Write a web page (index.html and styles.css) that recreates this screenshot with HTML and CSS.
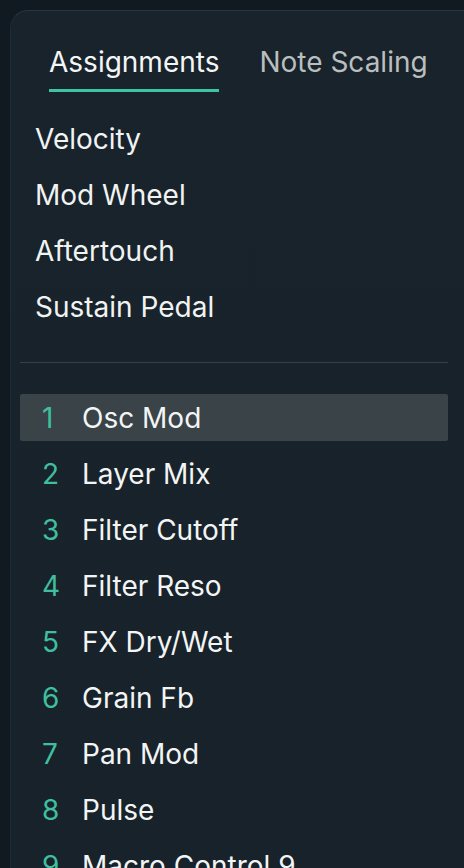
FILE: index.html
```html
<!DOCTYPE html>
<html>
<head>
<meta charset="utf-8">
<link rel="stylesheet" href="styles.css">
</head>
<body>
<div class="panel">
  <div class="tabs">
    <div class="tab active">Assignments</div>
    <div class="tab">Note Scaling</div>
  </div>
  <ul class="sources">
    <li>Velocity</li>
    <li>Mod Wheel</li>
    <li>Aftertouch</li>
    <li>Sustain Pedal</li>
  </ul>
  <div class="divider"></div>
  <ul class="macros">
    <li class="selected"><span class="num">1</span><span class="name">Osc Mod</span></li>
    <li><span class="num">2</span><span class="name">Layer Mix</span></li>
    <li><span class="num">3</span><span class="name">Filter Cutoff</span></li>
    <li><span class="num">4</span><span class="name">Filter Reso</span></li>
    <li><span class="num">5</span><span class="name">FX Dry/Wet</span></li>
    <li><span class="num">6</span><span class="name">Grain Fb</span></li>
    <li><span class="num">7</span><span class="name">Pan Mod</span></li>
    <li><span class="num">8</span><span class="name">Pulse</span></li>
    <li><span class="num">9</span><span class="name">Macro Control 9</span></li>
  </ul>
</div>
</body>
</html>
```
FILE: styles.css
```css
html, body {
  margin: 0;
  padding: 0;
  height: 100%;
  overflow: hidden;
}
body {
  background: #111a20;
  font-family: Inter, "Noto Sans", sans-serif;
  color: #f1f3f3;
  padding: 10px 0 0 10px;
  box-sizing: border-box;
}
.panel {
  background: linear-gradient(180deg, #19232b 0%, #17222a 100%);
  border-top: 1px solid #2a353d;
  border-left: 1px solid #1f2a32;
  border-top-left-radius: 18px;
  height: 100%;
  box-sizing: border-box;
  display: flex;
  flex-direction: column;
}
.panel > * {
  flex-shrink: 0;
}
.tabs {
  display: flex;
  gap: 40px;
  padding: 35px 0 0 38px;
}
.tab {
  font-size: 28px;
  line-height: 32px;
  padding-bottom: 11px;
  color: #b9bfbf;
  border-bottom: 3px solid transparent;
}
.tab.active {
  color: #f4f6f6;
  border-bottom-color: #3fc4a3;
}
ul {
  list-style: none;
  margin: 0;
  padding: 0;
}
.sources {
  padding: 19px 0 0 24px;
}
.sources li {
  font-size: 28px;
  line-height: 56px;
}
.divider {
  height: 1px;
  background: #354047;
  margin: 27px 16px 0 9px;
}
.macros {
  margin: 31px 16px 0 9px;
  display: flex;
  flex-direction: column;
  gap: 9px;
}
.macros li {
  display: flex;
  align-items: center;
  flex-shrink: 0;
  height: 47px;
  padding-left: 22px;
  font-size: 28px;
  border-radius: 2px;
}
.macros li.selected {
  background: #394348;
}
.num {
  width: 40px;
  color: #3fbf9f;
}
.name {
  color: #f3f5f5;
}
```
